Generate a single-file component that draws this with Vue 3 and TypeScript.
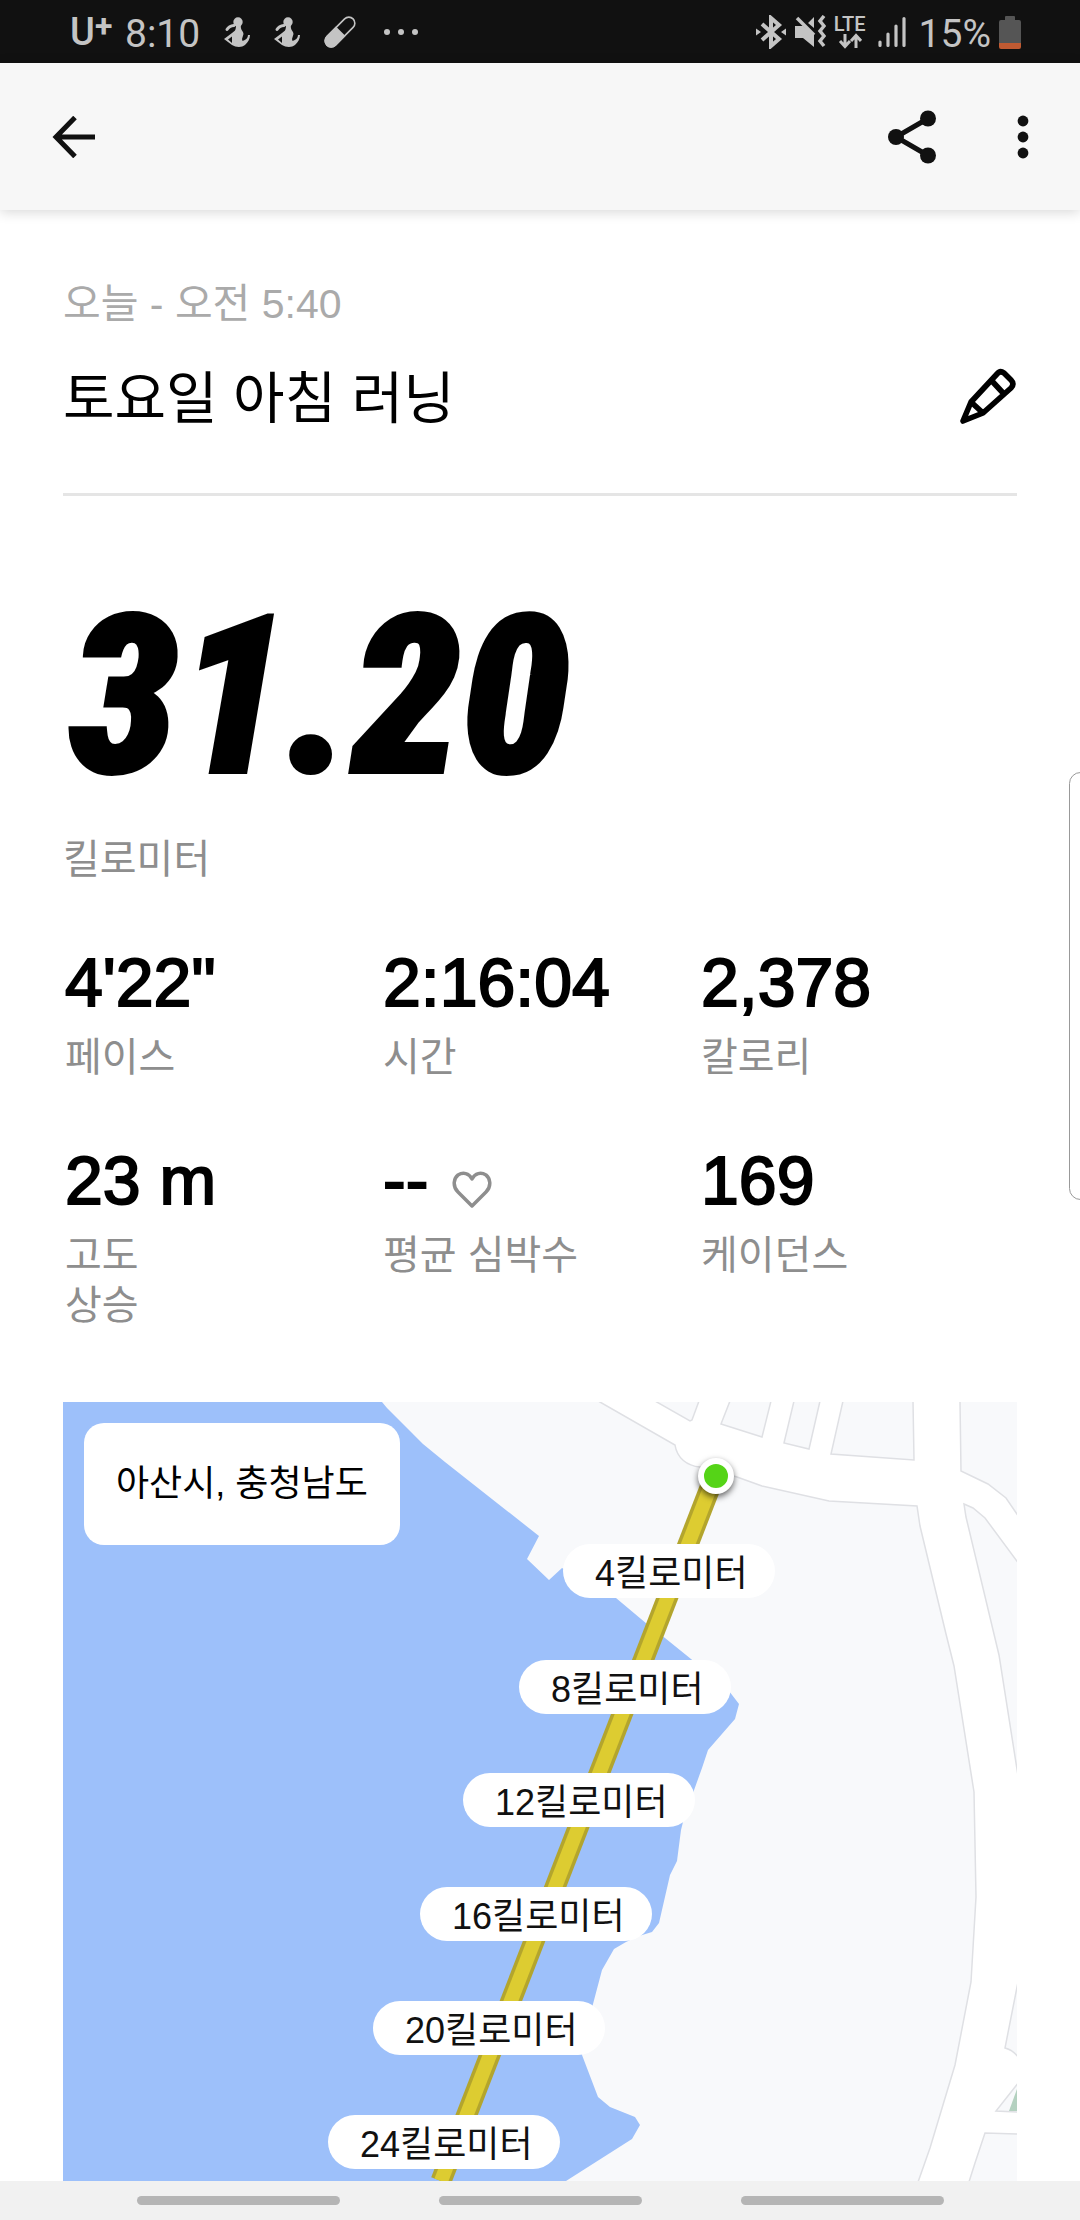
<script setup lang="ts">
interface Stat {
  value: string
  label: string
  heart?: boolean
}

interface Marker {
  km: number
  x: number
  y: number
}

const stats: Stat[] = [
  { value: '4\'22"', label: '페이스' },
  { value: '2:16:04', label: '시간' },
  { value: '2,378', label: '칼로리' },
  { value: '23 m', label: '고도\n상승' },
  { value: '--', label: '평균 심박수', heart: true },
  { value: '169', label: '케이던스' },
]

// Top-left corner of each distance marker on the map canvas
const markers: Marker[] = [
  { km: 4, x: 500, y: 142 },
  { km: 8, x: 456, y: 258 },
  { km: 12, x: 400, y: 371 },
  { km: 16, x: 357, y: 485 },
  { km: 20, x: 310, y: 599 },
  { km: 24, x: 265, y: 713 },
]
</script>

<template>
  <div class="screen">
    <header class="status">
      <div class="status-side">
        <span class="carrier">U<sup>+</sup></span>
        <span class="clock">8:10</span>
        <svg v-for="n in 2" :key="n" class="figure" viewBox="0 0 26 30" width="26" height="30">
          <circle cx="14" cy="5" r="4.7" />
          <path d="M3 12.5Q5 9 10 8.5" fill="none" stroke="#c4c4c4" stroke-width="3" stroke-linecap="round" />
          <path fill-rule="evenodd" d="M12 8C12 13 11 14 8 16L0 22L8 28C12 30.500 18 30.500 21 28C24 25 26 22 26 18L24 18C24 21 22 23 18.500 24L18 22L19.500 17C19.500 14 16 13 17 8ZM4 22.500L8 19.500V26Z" />
        </svg>
        <svg class="capsule" viewBox="0 0 32 32" width="32" height="32">
          <g transform="rotate(-45 16 16)">
            <rect x="-2.500" y="10" width="37" height="12" rx="6" fill="none" stroke="#c4c4c4" stroke-width="1.600" />
            <path d="M17 9.200V22.800H3.500a6.800 6.800 0 0 1 0-13.600Z" />
          </g>
        </svg>
        <svg class="more" viewBox="0 0 34 8" width="34" height="8">
          <circle cx="3" cy="4" r="3" /><circle cx="17" cy="4" r="3" /><circle cx="31" cy="4" r="3" />
        </svg>
      </div>
      <div class="status-side">
        <svg viewBox="0 0 30 34" width="30" height="34">
          <path d="M6 9L23 24L15 31V3L23 10L6 25" fill="none" stroke="#c4c4c4" stroke-width="4" />
          <path d="M0 13.500L5 17L0 20.500ZM30 13.500L25 17L30 20.500Z" />
        </svg>
        <svg class="mute" viewBox="0 0 32 34" width="32" height="34">
          <path d="M1 11H9L20 20V32L9 23H1ZM20 2V13L14 8Z" />
          <path d="M3 3L20 20" stroke="#c4c4c4" stroke-width="3.500" />
          <path d="M30 1L26 6L30 11L26 16L30 21L26 26L30 31" fill="none" stroke="#c4c4c4" stroke-width="3.500" />
        </svg>
        <span class="network">
          <span>LTE</span>
          <svg viewBox="0 0 24 16" width="24" height="16">
            <path d="M7 1V13M2 8L7 13.500L12 8M18 15V3M13 8L18 2.500L23 8" fill="none" stroke="#c4c4c4" stroke-width="3" />
          </svg>
        </span>
        <svg class="signal" viewBox="0 0 28 32" width="28" height="32">
          <path d="M2 26V29.500M10 18V29.500M18 10V29.500M26 2.500V29.500" stroke="#c4c4c4" stroke-width="3.200" stroke-linecap="round" />
        </svg>
        <span class="charge">15%</span>
        <svg viewBox="0 0 22 34" width="22" height="34">
          <path d="M6 5V2Q6 1 7 1H15Q16 1 16 2V5H20Q22 5 22 7V28H0V7Q0 5 2 5Z" fill="#555" />
          <path d="M0 28H22V32Q22 34 20 34H2Q0 34 0 32Z" fill="#c05a32" />
        </svg>
      </div>
    </header>

    <nav class="appbar">
      <button type="button" class="icon-button" aria-label="뒤로">
        <svg viewBox="0 0 44 42" width="44" height="42">
          <path d="M43 21H4M23 1.500L4 21L23 40.500" fill="none" stroke="#111" stroke-width="5" />
        </svg>
      </button>
      <div class="actions">
        <button type="button" class="icon-button" aria-label="공유">
          <svg viewBox="0 0 48 54" width="48" height="54" fill="#111">
            <path d="M40 8.500L8 27L40 45.500" fill="none" stroke="#111" stroke-width="5" />
            <circle cx="40" cy="8.500" r="8" /><circle cx="8" cy="27" r="8" /><circle cx="40" cy="45.500" r="8" />
          </svg>
        </button>
        <button type="button" class="icon-button" aria-label="더보기">
          <svg viewBox="0 0 12 44" width="12" height="44" fill="#111">
            <circle cx="6" cy="6" r="5.400" /><circle cx="6" cy="22" r="5.400" /><circle cx="6" cy="38" r="5.400" />
          </svg>
        </button>
      </div>
    </nav>

    <main class="content">
      <section class="heading">
        <p class="date">오늘 - 오전 5:40</p>
        <div class="title-row">
          <h1>토요일 아침 러닝</h1>
          <button type="button" class="icon-button" aria-label="제목 수정">
            <svg viewBox="0 0 58 62" width="58" height="62">
              <path d="M4 53L12 34L38 6Q41 2 45 5L52 12Q56 16 52 20L24 45ZM12 34L24 45M32 12L45 26" fill="none" stroke="#000" stroke-width="5.600" stroke-linejoin="round" />
              <path d="M4 53L7 46L12 50Z" />
            </svg>
          </button>
        </div>
      </section>

      <section class="distance">
        <p class="distance-value">31.20</p>
        <p class="label">킬로미터</p>
      </section>

      <dl class="stats">
        <div v-for="stat in stats" :key="stat.label" class="stat">
          <dd class="stat-value">
            {{ stat.value }}
            <svg v-if="stat.heart" class="heart" viewBox="0 0 40 38" width="40" height="38">
              <path d="M20 35L6 21C0 15 2 7 6 4C11 1 17 2 20 8C23 2 29 1 34 4C38 7 40 15 34 21Z" fill="none" stroke="#8e8e8e" stroke-width="3.500" stroke-linejoin="round" />
            </svg>
          </dd>
          <dt class="label">{{ stat.label }}</dt>
        </div>
      </dl>

      <section class="map" aria-label="러닝 경로">
        <svg class="canvas" viewBox="0 0 954 779" preserveAspectRatio="xMinYMin slice">
          <rect width="954" height="779" fill="#fff" />
          <g fill="#f8f9fb" stroke="#dfe0e4" stroke-width="1.500">
            <path d="M-3-3H532L537 0L612 43C614 56 624 64 637 65L674 75L699 84L766 99L854 104L857 124L883 232L891 264L911 390L913 495L908 580L892 663L867 746L854 783H-3Z" />
            <path d="M592-1L627 19L629 18L636-1Z" />
            <path d="M667-1L658 22L699 35L708-1Z" />
            <path d="M731-1L721 41L746 47L757-1Z" />
            <path d="M780-1L768 52L851 58L850-1Z" />
            <path d="M897-1L898 69L925 82L943 96L956 115V-1Z" />
            <path d="M901 102L910 106L922 116L956 162V380L936 253L903 115Z" />
            <path d="M956 575L942 646Q950 648 956 656Z" />
            <path d="M956 680L933 709L956 710Z" />
            <path d="M956 732L922 731L912 761L905 783H956Z" />
          </g>
          <path d="M954 687L946 709H954Z" fill="#b4d1c0" />
          <path
            d="M0 0H319L324 6L349 31L360 42L382 60L476 134L464 157L486 178L499 166L553 196L584 222L602 236L628 257L666 289L676 302L672 317L645 348L639 366L630 391L620 420L618 428L614 459L607 473L596 521L589 530L576 534L563 540L551 547L539 568L530 602L519 653L535 695L547 705L572 715L577 723L569 737L503 779H0Z"
            fill="#9dc0fa"
          />
          <path d="M652 73L378 779" stroke="#b3a52d" stroke-width="21" />
          <path d="M652 73L378 779" stroke="#ddcc31" stroke-width="14" />
        </svg>
        <span class="start"></span>
        <span v-for="m in markers" :key="m.km" class="marker" :style="{ left: m.x + 'px', top: m.y + 'px' }">{{ m.km }}킬로미터</span>
        <p class="place">아산시, 충청남도</p>
      </section>
    </main>

    <footer class="gestures">
      <span></span><span></span><span></span>
    </footer>
    <aside class="edge-handle"></aside>
  </div>
</template>

<style>
body {
  margin: 0;
  background: #fff;
}
</style>

<style scoped>
.screen {
  position: relative;
  display: flex;
  flex-direction: column;
  min-height: 100vh;
  overflow: hidden;
  color: #000;
  background: #fff;
  font-family: "Liberation Sans", "Noto Sans CJK KR", sans-serif;
}

p, h1, dl, dd {
  margin: 0;
}

svg {
  display: block;
  flex: none;
}

.status {
  display: flex;
  justify-content: space-between;
  align-items: center;
  box-sizing: border-box;
  height: 63px;
  padding: 0 59px 0 70px;
  color: #c4c4c4;
  background: #111;
  font-family: Roboto, sans-serif;
}

.status svg {
  fill: #c4c4c4;
}

.status-side {
  display: flex;
  align-items: center;
}

.carrier {
  width: 55px;
  font-size: 38px;
  font-weight: 500;
  line-height: 48px;
  white-space: nowrap;
}

.carrier sup {
  font-size: 32px;
  font-weight: 700;
  line-height: 0;
  vertical-align: 8px;
}

.clock,
.charge {
  font-size: 39px;
  line-height: 48px;
  padding-top: 4px;
}

.clock {
  margin-right: 24px;
}

.charge {
  margin: 0 8px 0 13px;
}

.figure {
  margin-right: 24px;
}

.more {
  margin-left: 28px;
}

.mute {
  margin: 0 8px;
}

.network {
  display: flex;
  flex-direction: column;
  align-items: center;
  font-size: 20px;
  font-weight: 500;
  line-height: 18px;
}

.signal {
  margin-left: 12px;
}

.appbar {
  display: flex;
  justify-content: space-between;
  align-items: center;
  box-sizing: border-box;
  height: 147px;
  padding: 0 51px 0 52px;
  background: #f7f7f7;
  box-shadow: 0 2px 12px rgba(0, 0, 0, 0.16);
}

.actions {
  display: flex;
  align-items: center;
  gap: 81px;
}

.icon-button {
  display: block;
  padding: 0;
  border: 0;
  background: none;
}

.content {
  display: flex;
  flex: 1;
  flex-direction: column;
  padding: 0 63px;
}

.heading {
  padding: 69px 0 60px;
  border-bottom: 3px solid #e5e5e5;
}

.date {
  color: #aaa;
  font-size: 41px;
  line-height: 50px;
}

.title-row {
  display: flex;
  justify-content: space-between;
  align-items: center;
  margin-top: 36px;
}

h1 {
  font-size: 56px;
  font-weight: 400;
  line-height: 68px;
}

.distance-value {
  margin-top: 93px;
  padding-left: 6px;
  font-family: "Roboto Condensed", Roboto, sans-serif;
  font-size: 220px;
  font-style: italic;
  font-weight: 900;
  line-height: 216px;
  -webkit-text-stroke: 4px #000;
}

.label {
  color: #8e8e8e;
  font-size: 40px;
  line-height: 50px;
  white-space: pre-line;
}

.distance .label {
  margin-top: 29px;
}

.stats {
  display: grid;
  grid-template-columns: repeat(3, 1fr);
  row-gap: 58px;
  margin-top: 58px;
}

.stat {
  display: flex;
  flex-direction: column;
  gap: 10px;
  padding-left: 2px;
}

.stat-value {
  display: flex;
  align-items: center;
  gap: 24px;
  font-size: 68px;
  line-height: 80px;
  -webkit-text-stroke: 2px #000;
}

.heart {
  margin-top: 20px;
}

.map {
  position: relative;
  flex: 1;
  min-height: 779px;
  margin-top: 72px;
  overflow: hidden;
}

.canvas {
  position: absolute;
  width: 100%;
  height: 100%;
}

.start {
  position: absolute;
  top: 56px;
  left: 635px;
  width: 24px;
  height: 24px;
  border: 6px solid #fff;
  border-radius: 50%;
  background: #55d417;
  box-shadow: 0 3px 6px rgba(0, 0, 0, 0.6);
}

.marker {
  position: absolute;
  padding: 6px 27px 0 32px;
  border-radius: 27px;
  color: #111;
  background: #fff;
  font-size: 36px;
  line-height: 48px;
  white-space: nowrap;
}

.place {
  position: absolute;
  top: 21px;
  left: 21px;
  padding: 36px 32px;
  border-radius: 20px;
  background: #fff;
  font-size: 36px;
  line-height: 50px;
}

.gestures {
  display: flex;
  justify-content: center;
  gap: 99px;
  box-sizing: border-box;
  height: 39px;
  padding-top: 15px;
  background: #f1f1f1;
}

.gestures span {
  width: 203px;
  height: 9px;
  border-radius: 5px;
  background: #b5b5b5;
}

.edge-handle {
  position: absolute;
  top: 772px;
  right: -12px;
  box-sizing: border-box;
  width: 23px;
  height: 428px;
  border: 1px solid #999;
  border-radius: 14px;
  background: #fff;
}
</style>
